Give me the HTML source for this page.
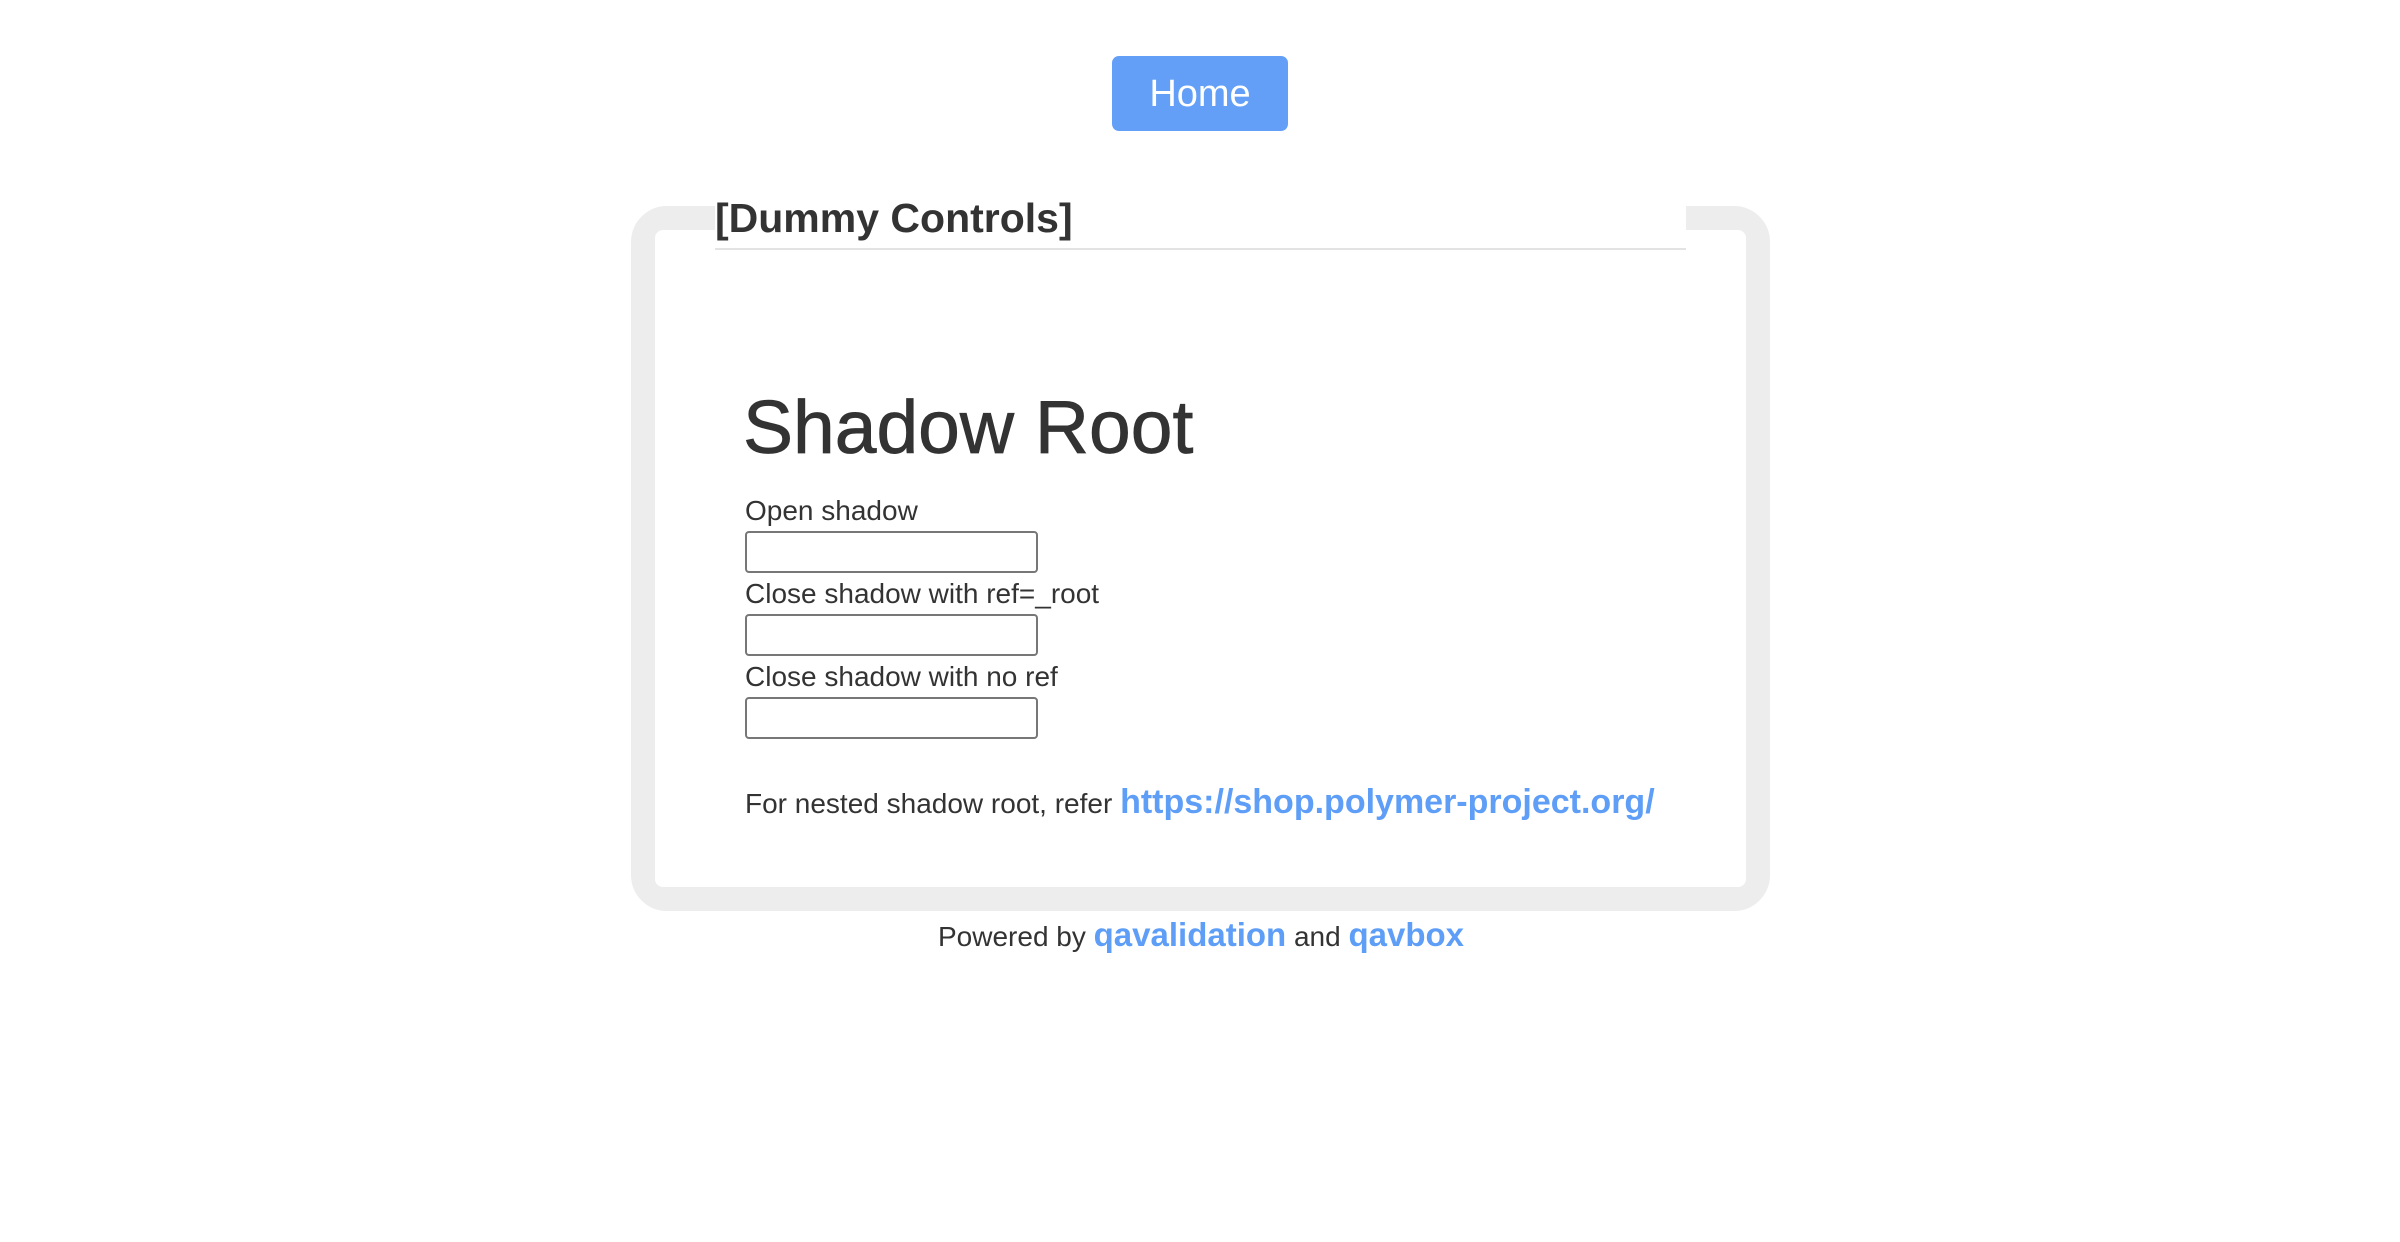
<!DOCTYPE html>
<html><head><meta charset="utf-8"><style>
html,body{margin:0;padding:0;background:#fff;width:2400px;height:1242px;overflow:hidden;font-family:"Liberation Sans",Arial,sans-serif;color:#333}
.a{position:absolute;white-space:nowrap}
.btn{left:1112px;top:56px;width:176px;height:75px;background:#639ff7;border-radius:7px;color:#fff;font-size:38px;text-align:center;line-height:77px}
.card{left:631px;top:206px;width:1091px;height:657px;border:24px solid #ededed;border-radius:36px;background:#fff}
.card-in{left:655px;top:230px;width:1091px;height:657px;border-radius:8px;background:#fff}
.leg{left:715px;top:190px;width:971px;height:58px;background:#fff;border-bottom:2px solid #e3e3e3}
.legt{left:715px;top:194px;font-size:41px;font-weight:bold;line-height:48px}
.h1{left:743px;top:384px;font-size:75px;line-height:86px;-webkit-text-stroke:0.8px #333}
.lbl{left:751px;font-size:28px;line-height:32px}
.inp{left:751px;width:289px;height:38px;border:2px solid #777;border-radius:4px;background:#fff}
.lnk{color:#5e9ef7;font-weight:bold;font-size:34px}
</style></head><body>
<div class="a btn">Home</div>
<div class="a card"></div>
<div class="a card-in"></div>
<div class="a leg"></div>
<div class="a legt">[Dummy Controls]</div>
<div class="a h1">Shadow Root</div>
<div class="a lbl" style="left:745px;top:495px">Open shadow</div>
<div class="a inp" style="left:745px;top:531px"></div>
<div class="a lbl" style="left:745px;top:578px">Close shadow with ref=_root</div>
<div class="a inp" style="left:745px;top:614px"></div>
<div class="a lbl" style="left:745px;top:661px">Close shadow with no ref</div>
<div class="a inp" style="left:745px;top:697px"></div>
<div class="a lbl" style="left:745px;top:782px;line-height:40px">For nested shadow root, refer <span class="lnk">https://shop.polymer-project.org/</span></div>
<div class="a lbl" style="left:938px;top:915px;line-height:40px">Powered by <span class="lnk" style="font-size:33px">qavalidation</span> and <span class="lnk" style="font-size:33px">qavbox</span></div>
</body></html>
